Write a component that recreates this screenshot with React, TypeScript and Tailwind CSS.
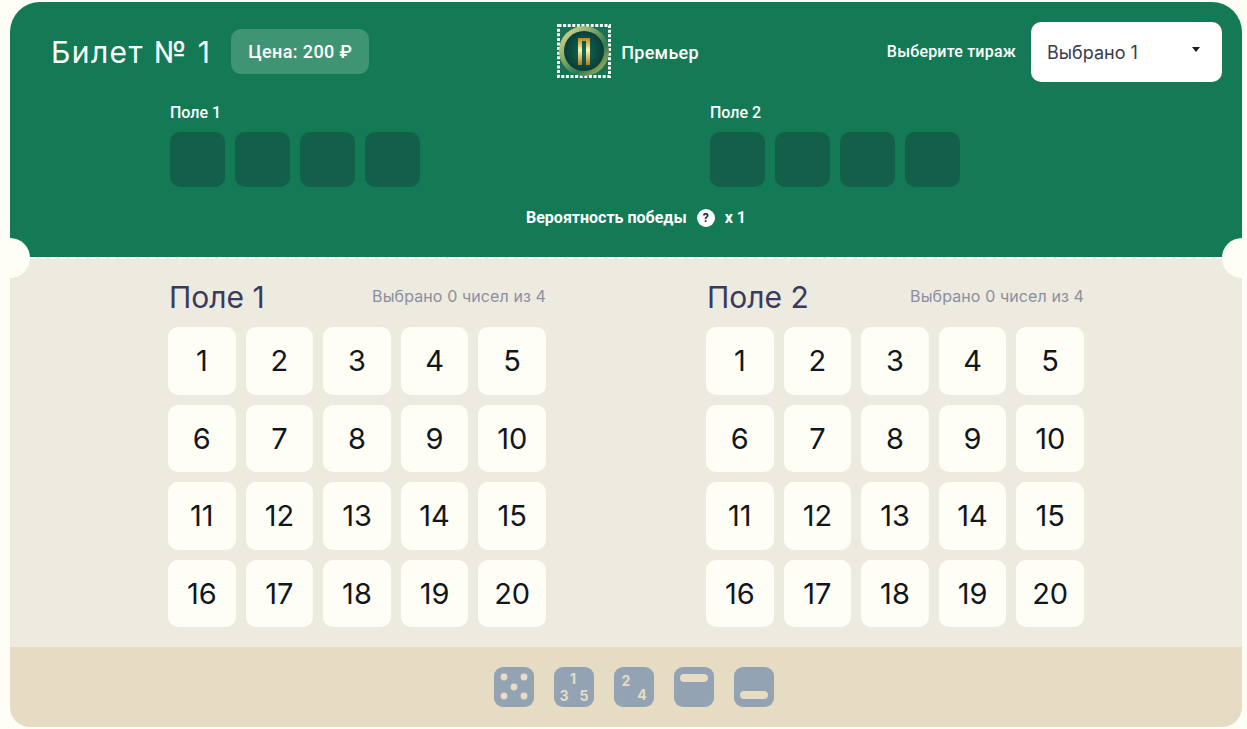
const numbers = Array.from({ length: 20 }, (_, i) => i + 1)

const Stamp = () => (
    <svg width="54" height="54" viewBox="0 0 54 54" className="mb-[2px] shrink-0">
        <defs>
            <linearGradient id="ring" x1="0" y1="0" x2="1" y2="1">
                <stop offset="0" stopColor="#efe39a" />
                <stop offset="0.4" stopColor="#7ea566" />
                <stop offset="0.65" stopColor="#2a7a55" />
                <stop offset="1" stopColor="#e2c052" />
            </linearGradient>
            <radialGradient id="core">
                <stop offset="0" stopColor="#126b55" />
                <stop offset="1" stopColor="#0a3d36" />
            </radialGradient>
            <linearGradient id="gold" x1="0" y1="0" x2="0" y2="1">
                <stop offset="0" stopColor="#b58a22" />
                <stop offset="0.45" stopColor="#fff6b0" />
                <stop offset="1" stopColor="#a87e1c" />
            </linearGradient>
        </defs>
        <rect x="1.5" y="1.5" width="51" height="51" fill="none" stroke="#ffffff" strokeWidth="3" strokeDasharray="3 1.6" />
        <rect x="3" y="3" width="48" height="48" fill="#1a7055" />
        <circle cx="27" cy="27" r="25" fill="url(#ring)" />
        <circle cx="27" cy="27" r="20" fill="url(#core)" />
        <path d="M21 14h12v27h-4V17h-4v24h-4z" fill="url(#gold)" />
    </svg>
)

const Slots = ({ title }: { title: string }) => (
    <div className="w-[250px]">
        <div className="text-[16px] leading-[20px] font-medium text-white">{title}</div>
        <div className="mt-[9px] flex gap-[10px]">
            {[0, 1, 2, 3].map((i) => (
                <div key={i} className="h-[55px] w-[55px] rounded-[10px] bg-[#135f49]"></div>
            ))}
        </div>
    </div>
)

const Field = ({ title }: { title: string }) => (
    <div className="w-[378px]">
        <div className="flex h-[68px] items-start justify-between pl-[1px] pt-[19px]">
            <h2 className="text-[30px] leading-[38px] font-normal text-[#3a3b5c] font-['Inter',sans-serif]">{title}</h2>
            <span className="pt-[8px] text-[16px] leading-[20px] tracking-[0.1px] text-[#8b8f9e] font-['Inter',sans-serif]">Выбрано 0 чисел из 4</span>
        </div>
        <div className="grid grid-cols-5 gap-[10px]">
            {numbers.map((n) => (
                <button
                    key={n}
                    className="flex h-[67.5px] items-center justify-center rounded-[10px] bg-[#fffef6] text-[29px] text-[#10161c] font-['Inter',sans-serif]"
                >
                    {n}
                </button>
            ))}
        </div>
    </div>
)

const Tool = ({ children }: { children: React.ReactNode }) => (
    <svg width="40" height="40" viewBox="0 0 40 40">
        <rect width="40" height="40" rx="9" fill="#94a3b3" />
        {children}
    </svg>
)

const toolText = "fill-[#e6dcc4] text-[14px] font-bold font-['Inter',sans-serif]"

export default function App() {
    return (
        <div className="relative min-h-[729px] overflow-hidden bg-[#fffef6] pl-[10px] pr-[5px] pt-[2px] font-['Roboto',sans-serif]">
            <div className="overflow-hidden rounded-b-[20px] rounded-t-[30px]">
                <div className="h-[255px] bg-[#147a56] pt-[20px]">
                    <div className="flex items-center justify-between pl-[41px] pr-[20px]">
                        <div className="flex items-center gap-[20px]">
                            <h1 className="text-[30px] leading-[40px] tracking-[1.4px] text-white font-['Inter',sans-serif]">Билет № 1</h1>
                            <div className="mb-[2px] flex h-[45px] w-[138px] items-center justify-center rounded-[10px] bg-[#3f9474] text-[18px] font-medium tracking-[0.4px] text-white">Цена: 200 ₽</div>
                        </div>
                        <div className="flex items-center gap-[10px]">
                            <Stamp />
                            <span className="text-[18px] font-medium tracking-[0.3px] text-white">Премьер</span>
                        </div>
                        <div className="flex items-center gap-[15px]">
                            <span className="text-[16px] font-medium tracking-[0.2px] text-white">Выберите тираж</span>
                            <div className="flex h-[60px] w-[191px] items-center justify-between rounded-[10px] bg-white pl-[16px] pr-[22px] text-[18px] text-[#3a3b4c] font-['Inter',sans-serif]">
                                <span>Выбрано 1</span>
                                <span className="mb-[5px] h-0 w-0 border-x-[4px] border-t-[5px] border-x-transparent border-t-[#1b1b22]"></span>
                            </div>
                        </div>
                    </div>
                    <div className="mt-[21px] flex gap-[290px] pl-[160px]">
                        <Slots title="Поле 1" />
                        <Slots title="Поле 2" />
                    </div>
                    <div className="mt-[19px] flex items-center justify-center gap-[10px] pl-[20px] text-[16px] font-bold text-white">
                        <span>Вероятность победы</span>
                        <span className="flex h-[18px] w-[18px] items-center justify-center rounded-full bg-white text-[12px] text-[#222222]">?</span>
                        <span>x 1</span>
                    </div>
                </div>
                <div className="h-[390px] border-t-2 border-dashed border-white bg-[#edeae0]">
                    <div className="flex justify-center gap-[160px]">
                        <Field title="Поле 1" />
                        <Field title="Поле 2" />
                    </div>
                </div>
                <div className="flex h-[80px] items-center justify-center gap-[20px] bg-[#e6dcc4] pl-[16px]">
                    <Tool>
                        <circle cx="10" cy="10" r="3.400" fill="#e6dcc4" />
                        <circle cx="30" cy="10" r="3.400" fill="#e6dcc4" />
                        <circle cx="20" cy="20" r="3.400" fill="#e6dcc4" />
                        <circle cx="10" cy="29" r="3.400" fill="#e6dcc4" />
                        <circle cx="30" cy="29" r="3.400" fill="#e6dcc4" />
                    </Tool>
                    <Tool>
                        <text x="19" y="17" textAnchor="middle" className={toolText}>1</text>
                        <text x="10" y="34" textAnchor="middle" className={toolText}>3</text>
                        <text x="30" y="34" textAnchor="middle" className={toolText}>5</text>
                    </Tool>
                    <Tool>
                        <text x="12" y="19" textAnchor="middle" className={toolText}>2</text>
                        <text x="28" y="33" textAnchor="middle" className={toolText}>4</text>
                    </Tool>
                    <Tool>
                        <rect x="6" y="7" width="28" height="8" rx="4" fill="#e6dcc4" />
                    </Tool>
                    <Tool>
                        <rect x="6" y="24" width="28" height="8" rx="4" fill="#e6dcc4" />
                    </Tool>
                </div>
            </div>
            <div className="absolute left-[-10px] top-[238px] h-[40px] w-[40px] rounded-full bg-[#fffef6]"></div>
            <div className="absolute right-[-15px] top-[238px] h-[40px] w-[40px] rounded-full bg-[#fffef6]"></div>
        </div>
    )
}
